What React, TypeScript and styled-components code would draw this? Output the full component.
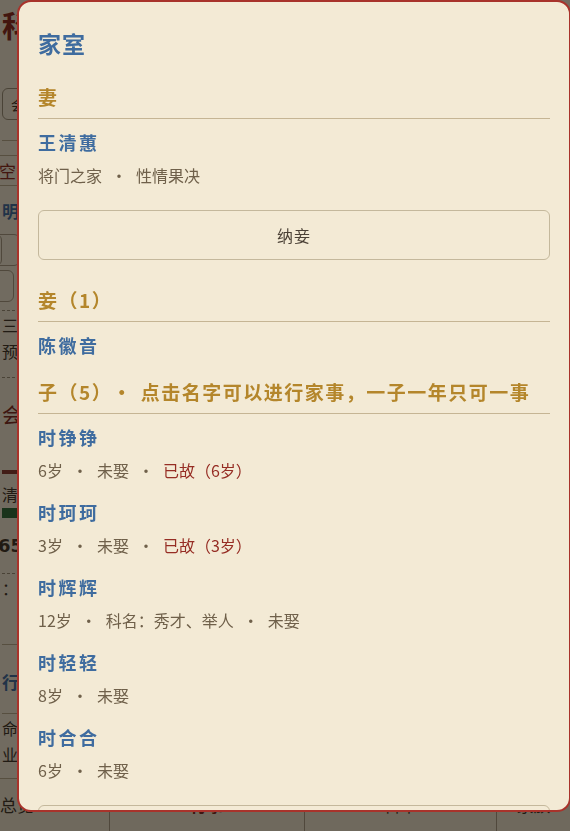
import React from 'react'
import styled, {createGlobalStyle} from 'styled-components'

const GlobalStyle = createGlobalStyle`
  html, body {
    margin: 0;
    padding: 0;
    height: 100%;
    overflow: hidden;
    background: #f3ead5;
    font-family: "Noto Sans CJK SC", "Noto Sans", sans-serif;
  }
`

type Child = {
  name: string
  info: string[]
  dead?: string
}

const CHILDREN: Child[] = [
  {name: '时铮铮', info: ['6岁', '未娶'], dead: '已故（6岁）'},
  {name: '时珂珂', info: ['3岁', '未娶'], dead: '已故（3岁）'},
  {name: '时辉辉', info: ['12岁', '科名：秀才、举人', '未娶']},
  {name: '时轻轻', info: ['8岁', '未娶']},
  {name: '时合合', info: ['6岁', '未娶']},
]

function App() {
  return (
    <>
      <GlobalStyle />
      <BackPage>
        <BackTitle>科</BackTitle>
        <BackInput>会试</BackInput>
        <BackRule />
        <BackTag>空闲</BackTag>
        <BackHeading>明朝</BackHeading>
        <BackButtons>
          <BackBox />
          <BackBox />
        </BackButtons>
        <BackBox />
        <BackDashed $gap={8} />
        <BackText>三年</BackText>
        <BackText>预计</BackText>
        <BackDashed />
        <BackBig>会举</BackBig>
        <BackBar $color="#8a3a30" />
        <BackText $gap={8}>清名</BackText>
        <BackBar $color="#2f6b3a" $tall />
        <BackNumber>65</BackNumber>
        <BackDashed />
        <BackText>：</BackText>
        <BackRule $gap={44} />
        <BackHeading $gap={24}>行事</BackHeading>
        <BackRule $gap={18} />
        <BackText>命事</BackText>
        <BackText>业一</BackText>
      </BackPage>
      <BottomNav>
        <NavItem $first>总览</NavItem>
        <NavItem $active>行事</NavItem>
        <NavItem>科举</NavItem>
        <NavItem>家族</NavItem>
      </BottomNav>

      <Overlay>
        <Modal>
          <ModalTitle>家室</ModalTitle>

          <SectionHeader>妻</SectionHeader>
          <Person>
            <PersonName>王清蕙</PersonName>
            <InfoLine>
              <span>将门之家</span>
              <Dot>·</Dot>
              <span>性情果决</span>
            </InfoLine>
          </Person>
          <ActionButton>纳妾</ActionButton>

          <SectionHeader $gap={26}>妾（1）</SectionHeader>
          <Person>
            <PersonName>陈徽音</PersonName>
          </Person>

          <SectionHeader $gap={3}>
            子（5）<Bullet>•</Bullet>点击名字可以进行家事，一子一年只可一事
          </SectionHeader>
          {CHILDREN.map((c) => (
            <Person key={c.name}>
              <PersonName>{c.name}</PersonName>
              <InfoLine>
                {c.info.map((t, i) => (
                  <React.Fragment key={t}>
                    {i > 0 && <Dot>·</Dot>}
                    <span>{t}</span>
                  </React.Fragment>
                ))}
                {c.dead && (
                  <>
                    <Dot>·</Dot>
                    <Dead>{c.dead}</Dead>
                  </>
                )}
              </InfoLine>
            </Person>
          ))}
          <ActionButton>分家</ActionButton>
        </Modal>
      </Overlay>
    </>
  )
}

/* ---------- page behind the dialog ---------- */

const BackPage = styled.div`
  display: flex;
  flex-direction: column;
  padding: 4px 0 0 2px;
  height: 780px;
  box-sizing: border-box;
  color: #3e352a;
`

const BackTitle = styled.div`
  font-size: 30px;
  font-weight: 700;
  color: #8b2a1f;
  line-height: 40px;
  letter-spacing: 4px;
`

const BackInput = styled.div`
  margin-top: 44px;
  height: 32px;
  width: 200px;
  border: 1px solid #9c907a;
  border-radius: 6px;
  box-sizing: border-box;
  padding-left: 8px;
  font-size: 14px;
  line-height: 30px;
`

const BackRule = styled.div<{$gap?: number}>`
  margin-top: ${({$gap}) => $gap ?? 20}px;
  height: 1px;
  background: #b9ab8e;
`

const BackTag = styled.div`
  margin-top: 14px;
  width: 60px;
  height: 31px;
  border: 1px solid #b9ab8e;
  box-sizing: border-box;
  color: #8b2a1f;
  font-size: 17px;
  line-height: 29px;
  margin-left: -4px;
`

const BackHeading = styled.div<{$gap?: number}>`
  margin-top: ${({$gap}) => $gap ?? 12}px;
  font-size: 17px;
  font-weight: 700;
  color: #3f6c9f;
  line-height: 26px;
`

const BackButtons = styled.div`
  display: flex;
  gap: 6px;
  margin-left: -12px;
  margin-top: 6px;
`

const BackBox = styled.div`
  width: 60px;
  height: 30px;
  border: 1px solid #a89c85;
  border-radius: 6px;
  margin: 4px 0 0 -50px;
  flex-shrink: 0;
`

const BackDashed = styled.div<{$gap?: number}>`
  margin-top: ${({$gap}) => $gap ?? 14}px;
  border-top: 1px dashed #9c907a;
`

const BackText = styled.div<{$gap?: number}>`
  font-size: 16px;
  line-height: 24px;
  margin-top: ${({$gap}) => $gap ?? 2}px;
`

const BackBig = styled.div`
  margin-top: 22px;
  font-size: 20px;
  color: #7d2a22;
  line-height: 30px;
`

const BackBar = styled.div<{$color: string; $tall?: boolean}>`
  margin-top: ${({$tall}) => ($tall ? 2 : 40)}px;
  height: ${({$tall}) => ($tall ? 10 : 4)}px;
  background: ${({$color}) => $color};
`

const BackNumber = styled.div`
  margin-top: 15px;
  font-size: 18px;
  font-weight: 700;
  line-height: 26px;
  font-family: "DejaVu Sans", sans-serif;
  margin-left: -4px;
`

const BottomNav = styled.nav`
  position: fixed;
  left: 0;
  right: 0;
  bottom: 0;
  height: 52px;
  display: grid;
  grid-template-columns: 109px 195px 192px 1fr;
  border-top: 1px solid #b9ab8e;
  background: #efe5cf;
`

const NavItem = styled.div<{$first?: boolean; $active?: boolean}>`
  font-size: 17px;
  line-height: 52px;
  color: ${({$active}) => ($active ? '#7d2a22' : '#3e352a')};
  font-weight: ${({$active}) => ($active ? 700 : 400)};
  text-align: ${({$first}) => ($first ? 'left' : 'center')};
  border-left: ${({$first}) => ($first ? 'none' : '1px solid #a89c85')};
`

/* ---------- dialog ---------- */

const Overlay = styled.div`
  position: fixed;
  inset: 0;
  background: rgba(10, 8, 4, 0.56);
`

const Modal = styled.div`
  position: absolute;
  left: 17px;
  top: 0;
  width: 554px;
  height: 812px;
  box-sizing: border-box;
  overflow: hidden;
  padding: 26px 19px 28px;
  background: #f3ead5;
  border: 2px solid #a8332b;
  border-radius: 14px;
  display: flex;
  flex-direction: column;
`

const ModalTitle = styled.h2`
  margin: 0 0 25px;
  font-size: 23px;
  line-height: 30px;
  font-weight: 700;
  letter-spacing: 1px;
  color: #3f6c9f;
`

const SectionHeader = styled.div<{$gap?: number}>`
  margin-top: ${({$gap}) => $gap ?? 0}px;
  padding-bottom: 7px;
  margin-bottom: 9px;
  border-bottom: 1px solid #c5b594;
  font-size: 19px;
  line-height: 28px;
  font-weight: 700;
  letter-spacing: 1.5px;
  color: #b4862b;
  white-space: nowrap;
`

const Bullet = styled.span`
  margin: 0 8px 0 0;
`

const Person = styled.div`
  display: flex;
  flex-direction: column;
  gap: 7px;
  margin-bottom: 16px;
`

const PersonName = styled.div`
  font-size: 18px;
  line-height: 28px;
  font-weight: 700;
  letter-spacing: 2.5px;
  color: #3f6c9f;
  cursor: pointer;
`

const InfoLine = styled.div`
  display: flex;
  align-items: center;
  font-size: 16px;
  line-height: 24px;
  color: #6f604a;
`

const Dot = styled.span`
  margin: 0 9px;
`

const Dead = styled.span`
  color: #962d24;
`

const ActionButton = styled.button`
  flex-shrink: 0;
  margin-top: 7px;
  height: 50px;
  width: 100%;
  border: 1px solid #c4b89c;
  border-radius: 6px;
  background: transparent;
  font-family: inherit;
  font-size: 16px;
  letter-spacing: 1px;
  color: #4b4136;
  cursor: pointer;
`

export default App
